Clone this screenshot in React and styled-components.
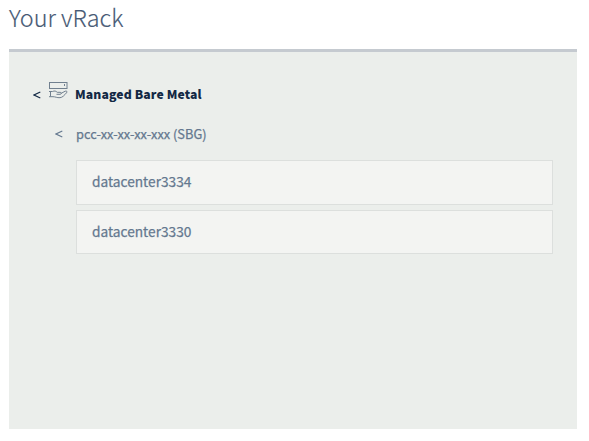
import React from "react";
import styled, { createGlobalStyle } from "styled-components";

const GlobalStyle = createGlobalStyle`
  * { box-sizing: border-box; }
  body {
    margin: 0;
    background: #fff;
    color: #5b7088;
    font-family: "Noto Sans CJK SC", "Noto Sans", sans-serif;
  }
`;

const Page = styled.main`
  padding: 0 12px 12px 9px;
  width: 589px;
  height: 441px;
`;

const Title = styled.h1`
  margin: 0;
  height: 49px;
  font-size: 23.4px;
  font-weight: 300;
  line-height: 35px;
  color: #485a75;
  -webkit-text-stroke: 0.15px currentColor;
  white-space: nowrap;
`;

const Panel = styled.section`
  height: 380px;
  border-top: 3px solid #c5cad0;
  background: #ebeeeb;
  padding: 32px 24px 0;
`;

const Heading = styled.h2`
  display: flex;
  align-items: center;
  margin: 0;
  height: 20px;
  font-size: 12.2px;
  font-weight: 900;
  letter-spacing: 0.12px;
  color: #122844;
  white-space: nowrap;
`;

const ServerIcon = styled.svg`
  display: block;
  flex: none;
  width: 19px;
  height: 18px;
  margin: -8px 7px 0 8px;
`;

const Chevron = styled.svg`
  display: block;
  flex: none;
  width: 8px;
  height: 8px;
  margin-top: 2px;
`;

const Service = styled.div`
  display: flex;
  align-items: center;
  height: 20px;
  margin: 19px 0 17px 22px;
  gap: 13px;
  font-size: 12.8px;
  color: #64788f;
  -webkit-text-stroke: 0.25px currentColor;
  white-space: nowrap;
`;

const List = styled.ul`
  display: grid;
  grid-template-rows: 45px 44px;
  gap: 5px;
  margin: 0 0 0 43px;
  padding: 0;
  list-style: none;
`;

const Item = styled.li`
  padding: 0 15px;
  border: 1px solid #dcdfdd;
  background: #f3f4f2;
  color: #64788f;
  font-size: 13.7px;
  line-height: 41px;
  -webkit-text-stroke: 0.25px currentColor;
`;

function Back({ color }) {
  return (
    <Chevron viewBox="0 0 8 8" fill="none" stroke={color} strokeWidth="1.1">
      <path d="M7.3 1 L1 4 L7.3 7" />
    </Chevron>
  );
}

function HostedServer() {
  return (
    <ServerIcon viewBox="0 0 19 18" fill="none" stroke="#71808f" strokeWidth="1">
      <rect x="0.5" y="1.5" width="17.5" height="6" />
      <path d="M15.5 3v2" />
      <path d="M0 10.5h3.5c2-.9 3.5-.5 4.7.8h3c1.4 0 1.4 2 0 2H7.5M12 12.4l4.2-2.2c1.5-.6 2.4.5 1.3 1.6-2.2 2.5-4 4.7-6.5 4.9-3.2.2-4.5-1-7-1H0M1.5 10.5v5" />
    </ServerIcon>
  );
}

const datacenters = ["datacenter3334", "datacenter3330"];

export default function App() {
  return (
    <Page>
      <GlobalStyle />
      <Title>Your vRack</Title>
      <Panel>
        <Heading>
          <Back color="#122844" />
          <HostedServer />
          Managed Bare Metal
        </Heading>
        <Service>
          <Back color="#64788f" />
          pcc-xx-xx-xx-xxx (SBG)
        </Service>
        <List>
          {datacenters.map((name) => (
            <Item key={name}>{name}</Item>
          ))}
        </List>
      </Panel>
    </Page>
  );
}
